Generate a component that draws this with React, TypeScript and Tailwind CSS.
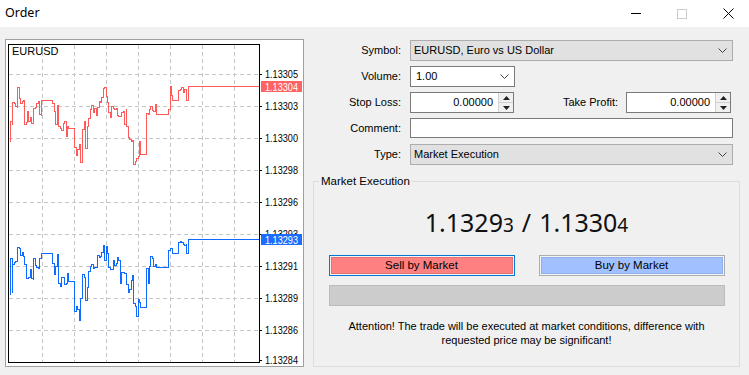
import React from "react";

type Seg = [number, number, number, number];

const segs: Seg[] = [
  [10, 12, 100, 142],
  [12, 17, 100, 113],
  [17, 20, 86, 100],
  [20, 24, 98, 106],
  [24, 28, 110, 128],
  [28, 33, 114, 128],
  [33, 41, 100, 115],
  [41, 52, 100, 100],
  [52, 58, 100, 125],
  [58, 68, 118, 136],
  [68, 74, 128, 128],
  [74, 82, 140, 168],
  [82, 88, 118, 150],
  [88, 97, 100, 120],
  [97, 101, 100, 110],
  [101, 108, 86, 110],
  [108, 118, 100, 118],
  [118, 126, 105, 130],
  [126, 133, 120, 142],
  [133, 140, 140, 168],
  [140, 146, 154, 154],
  [146, 150, 100, 140],
  [150, 156, 100, 115],
  [156, 168, 114, 114],
  [168, 172, 86, 110],
  [172, 178, 100, 100],
  [178, 186, 86, 92],
  [186, 188, 100, 100],
];

function buildPath(seed: number): string {
  let s = seed;
  const r = () => {
    s = (s * 9301 + 49297) % 233280;
    return s / 233280;
  };
  let d = "M10.5,142";
  for (const [x0, x1, a, b] of segs) {
    for (let x = x0; x < x1; x += 1.5) {
      const y = a === b ? a : Math.round(a + r() * (b - a));
      d += ` H${Math.round(x) + 0.5} V${y + 0.5}`;
    }
  }
  d += " H188.5 V86.5 H259";
  return d;
}

const redPath = buildPath(7);
const bluePath = buildPath(23);

const axis: [number, string][] = [
  [74, "1.13305"],
  [106, "1.13303"],
  [138, "1.13300"],
  [170, "1.13298"],
  [202, "1.13296"],
  [234, "1.13293"],
  [266, "1.13291"],
  [298, "1.13289"],
  [330, "1.13286"],
  [360, "1.13284"],
];

const axisFont = "Liberation Sans, Arial, sans-serif";

function Chart() {
  const vx = [42, 74, 106, 138, 170, 202, 234];
  const hy = [74, 106, 138, 170, 202, 234, 266, 298, 330];
  return (
    <svg width={297} height={326} viewBox="6 40 297 326" className="block">
      <defs>
        <clipPath id="plot">
          <rect x={9} y={45} width={250} height={317} />
        </clipPath>
      </defs>
      <g stroke="#c6c6c6" strokeWidth={1} strokeDasharray="4 3" shapeRendering="crispEdges">
        {vx.map((x) => (
          <line key={"v" + x} x1={x + 0.5} y1={45} x2={x + 0.5} y2={362} />
        ))}
        {hy.map((y) => (
          <line key={"h" + y} x1={9} y1={y + 0.5} x2={259} y2={y + 0.5} />
        ))}
      </g>
      <g clipPath="url(#plot)" fill="none" strokeWidth={1} shapeRendering="crispEdges">
        <path d={redPath} stroke="#ff5a5a" />
        <path d={bluePath} stroke="#0f6bff" transform="translate(0,153)" />
      </g>
      <rect x={8.5} y={44.5} width={251} height={318} fill="none" stroke="#000" strokeWidth={1} shapeRendering="crispEdges" />
      <text x={12} y={55} fontSize={11} fontFamily={axisFont} fill="#000">
        EURUSD
      </text>
      <g fontSize={10.5} fontFamily={axisFont} fill="#000">
        {axis.map(([y, t]) => (
          <g key={t + y}>
            <line x1={259} y1={y + 0.5} x2={262} y2={y + 0.5} stroke="#000" shapeRendering="crispEdges" />
            <text x={265} y={y + 4} textLength={33} lengthAdjust="spacingAndGlyphs">
              {t}
            </text>
          </g>
        ))}
      </g>
      <rect x={261} y={81} width={41} height={11} fill="#ff6262" />
      <text x={265} y={90.5} fontSize={10.5} fontFamily={axisFont} fill="#fff" textLength={33} lengthAdjust="spacingAndGlyphs">
        1.13304
      </text>
      <rect x={261} y={234} width={41} height={11} fill="#1a6dff" />
      <text x={265} y={243.5} fontSize={10.5} fontFamily={axisFont} fill="#fff" textLength={33} lengthAdjust="spacingAndGlyphs">
        1.13293
      </text>
    </svg>
  );
}

function Chevron() {
  return (
    <svg width={9} height={5} viewBox="0 0 9 5" className="block">
      <polyline points="0.5,0.5 4.5,4.5 8.5,0.5" fill="none" stroke="#444" strokeWidth={1} />
    </svg>
  );
}

function Spinner() {
  return (
    <div className="flex flex-col w-[15px] h-full border-l border-[#d0d0d0] bg-[#f0f0f0]">
      <div className="flex-1 flex items-center justify-center border-b border-[#d0d0d0]">
        <svg width={7} height={4} viewBox="0 0 7 4">
          <polygon points="0,4 3.5,0 7,4" fill="#222" />
        </svg>
      </div>
      <div className="flex-1 flex items-center justify-center">
        <svg width={7} height={4} viewBox="0 0 7 4">
          <polygon points="0,0 3.5,4 7,0" fill="#222" />
        </svg>
      </div>
    </div>
  );
}

export default function App() {
  return (
    <div className="w-[749px] h-[375px] overflow-hidden bg-[#f0f0f0] text-[11px] text-black font-['Liberation_Sans',Arial,sans-serif]">
      {/* title bar */}
      <div className="h-[27px] bg-white flex items-center relative">
        <span className="ml-[5px] text-[12.5px] font-['Noto_Sans',sans-serif]">Order</span>
        <div className="ml-auto flex items-center h-full">
          <div className="w-[46px] h-full flex items-center justify-center mr-0">
            <div className="w-[10px] h-[1px] bg-black" />
          </div>
          <div className="w-[46px] h-full flex items-center justify-center">
            <div className="w-[10px] h-[10px] border border-[#cccccc]" />
          </div>
          <div className="w-[46px] h-full flex items-center justify-center mr-[-2px]">
            <svg width={11} height={11} viewBox="0 0 11 11">
              <path d="M0.5,0.5 L10.5,10.5 M10.5,0.5 L0.5,10.5" stroke="#000" strokeWidth={1} />
            </svg>
          </div>
        </div>
      </div>

      <div className="flex">
        {/* chart panel */}
        <div className="ml-[5px] mt-[12px] w-[299px] h-[328px] border border-[#a0a0a0] bg-white">
          <Chart />
        </div>

        {/* right side */}
        <div className="ml-[9px] w-[427px] flex flex-col">
          {/* Symbol */}
          <div className="mt-[13px] flex items-center h-[21px]">
            <div className="w-[88px] text-right">Symbol:</div>
            <div className="ml-[9px] w-[323px] h-full bg-[#e1e1e1] border border-[#adadad] flex items-center pl-[3px] pr-[5px]">
              <span>EURUSD, Euro vs US Dollar</span>
              <div className="ml-auto">
                <Chevron />
              </div>
            </div>
          </div>
          {/* Volume */}
          <div className="mt-[5px] flex items-center h-[21px]">
            <div className="w-[88px] text-right">Volume:</div>
            <div className="ml-[9px] w-[105px] h-full bg-white border border-[#7a7a7a] flex items-center pl-[5px] pr-[5px]">
              <span>1.00</span>
              <div className="ml-auto">
                <Chevron />
              </div>
            </div>
          </div>
          {/* Stop loss / take profit */}
          <div className="mt-[5px] flex items-center h-[21px]">
            <div className="w-[88px] text-right">Stop Loss:</div>
            <div className="ml-[9px] w-[104px] h-full bg-white border border-[#7a7a7a] flex items-center">
              <span className="flex-1 text-right pr-[5px]">0.00000</span>
              <Spinner />
            </div>
            <div className="flex-1 text-right pr-[8px]">Take Profit:</div>
            <div className="w-[105px] mr-[9px] h-full bg-white border border-[#7a7a7a] flex items-center">
              <span className="flex-1 text-right pr-[5px]">0.00000</span>
              <Spinner />
            </div>
          </div>
          {/* Comment */}
          <div className="mt-[5px] flex items-center h-[20px]">
            <div className="w-[88px] text-right">Comment:</div>
            <div className="ml-[9px] w-[323px] h-full bg-white border border-[#7a7a7a]" />
          </div>
          {/* Type */}
          <div className="mt-[6px] flex items-center h-[21px]">
            <div className="w-[88px] text-right">Type:</div>
            <div className="ml-[9px] w-[323px] h-full bg-[#e1e1e1] border border-[#adadad] flex items-center pl-[3px] pr-[5px]">
              <span>Market Execution</span>
              <div className="ml-auto">
                <Chevron />
              </div>
            </div>
          </div>

          {/* Group box */}
          <div className="mt-[16px] relative w-[427px] h-[186px] border border-[#dcdcdc] flex flex-col items-center">
            <span className="absolute top-[-8px] left-[5px] px-[2px] bg-[#f0f0f0] leading-[15px] text-[11.5px]">Market Execution</span>
            <div className="mt-[26px] h-[28px] flex items-baseline text-[25px] leading-[28px] font-['Noto_Sans',sans-serif] text-[#111]">
              <span>1.1329</span>
              <span className="text-[19px]">3</span>
              <span className="mx-[8px]">/</span>
              <span>1.1330</span>
              <span className="text-[19px]">4</span>
            </div>
            <div className="mt-[19px] w-[396px] flex justify-between">
              <div className="w-[186px] h-[21px] border border-[#0078d7] p-[1px] bg-[#f4f4f4]">
                <div className="w-full h-full bg-[#ff8080] border border-[#e86f6f] flex items-center justify-center leading-none text-[11.5px]">
                  Sell by Market
                </div>
              </div>
              <div className="w-[186px] h-[21px] border border-[#adadad] p-[1px] bg-[#f4f4f4]">
                <div className="w-full h-full bg-[#a0c0ff] border border-[#90b0ee] flex items-center justify-center leading-none text-[11.5px]">
                  Buy by Market
                </div>
              </div>
            </div>
            <div className="mt-[9px] w-[396px] h-[21px] bg-[#cccccc] border border-[#bcbcbc]" />
            <div className="mt-[13px] text-center leading-[14px]">
              Attention! The trade will be executed at market conditions, difference with
              <br />
              requested price may be significant!
            </div>
          </div>
        </div>
      </div>
    </div>
  );
}
